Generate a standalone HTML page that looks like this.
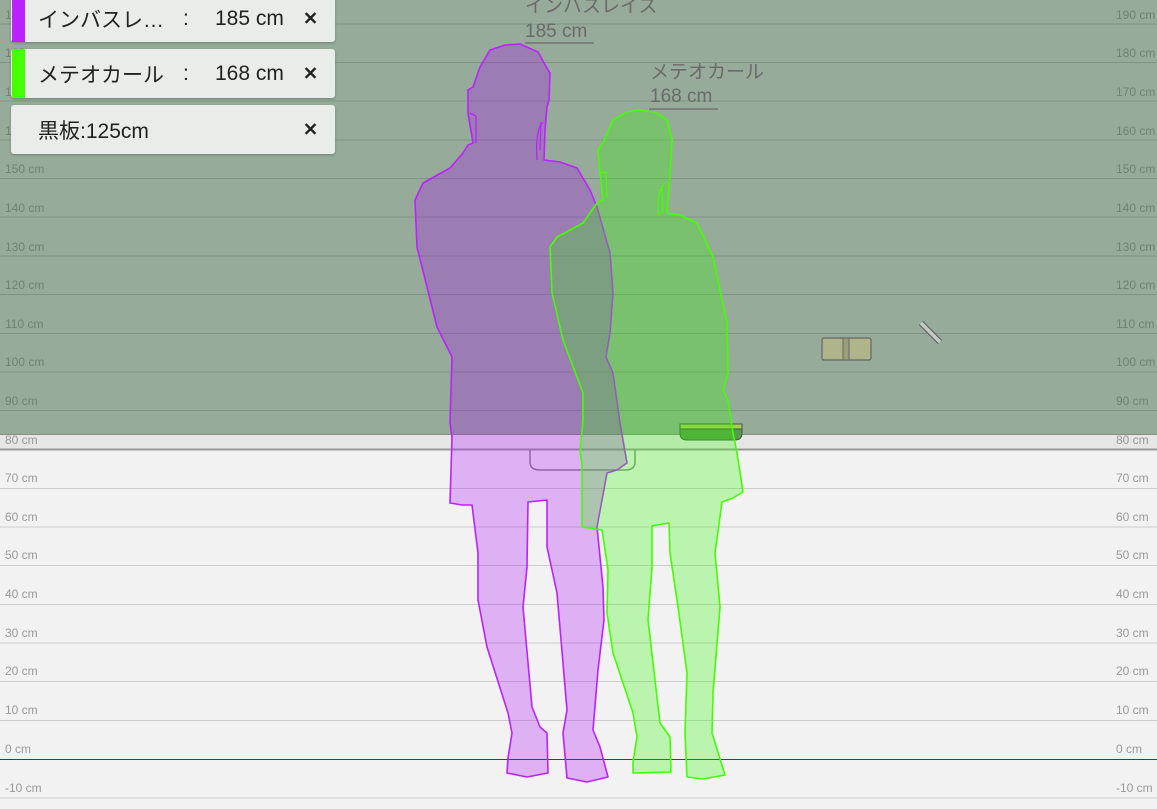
<!DOCTYPE html>
<html><head><meta charset="utf-8"><style>
html,body{margin:0;padding:0;width:1157px;height:809px;overflow:hidden;background:#f2f2f2;font-family:"Liberation Sans","Noto Sans CJK JP",sans-serif}
svg{position:absolute;left:0;top:0}
.card{position:absolute;left:11px;width:324px;background:#e9ece9;border-radius:3px;box-shadow:0 1px 2px rgba(0,0,0,.25);font-size:21px;color:#222}
.bar{position:absolute;left:1px;top:0;bottom:0;width:13px}
.t{position:absolute;left:27px;top:50%;transform:translateY(-50%);white-space:nowrap}
.c{position:absolute;left:172px;top:50%;transform:translateY(-50%)}
.v{position:absolute;left:204px;top:50%;transform:translateY(-50%)}
.x{position:absolute;left:292px;top:50%;transform:translateY(-50%);font-weight:bold;font-size:18px}
</style></head><body>
<svg width="1157" height="809" viewBox="0 0 1157 809" font-family="Liberation Sans, Noto Sans CJK JP, sans-serif">
<rect x="0" y="0" width="1157" height="435" fill="#96ab99"/>
<rect x="0" y="435" width="1157" height="14" fill="#e6e6e6"/>
<g stroke="#7f9382" stroke-width="1">
<line x1="0" x2="1157" y1="24" y2="24"/><line x1="0" x2="1157" y1="62.5" y2="62.5"/><line x1="0" x2="1157" y1="101" y2="101"/><line x1="0" x2="1157" y1="140" y2="140"/><line x1="0" x2="1157" y1="178.5" y2="178.5"/><line x1="0" x2="1157" y1="217" y2="217"/><line x1="0" x2="1157" y1="256" y2="256"/><line x1="0" x2="1157" y1="294.5" y2="294.5"/><line x1="0" x2="1157" y1="333.5" y2="333.5"/><line x1="0" x2="1157" y1="372" y2="372"/><line x1="0" x2="1157" y1="410.5" y2="410.5"/>
</g>
<line x1="0" x2="1157" y1="434.5" y2="434.5" stroke="#8a8a8a"/>
<line x1="0" x2="1157" y1="449.5" y2="449.5" stroke="#999" stroke-width="2"/>
<g stroke="#cccccc" stroke-width="1">
<line x1="0" x2="1157" y1="488.5" y2="488.5"/><line x1="0" x2="1157" y1="527" y2="527"/><line x1="0" x2="1157" y1="565.5" y2="565.5"/><line x1="0" x2="1157" y1="604.5" y2="604.5"/><line x1="0" x2="1157" y1="643" y2="643"/><line x1="0" x2="1157" y1="681.5" y2="681.5"/><line x1="0" x2="1157" y1="720.5" y2="720.5"/><line x1="0" x2="1157" y1="798" y2="798"/>
</g>
<line x1="0" x2="1157" y1="759.5" y2="759.5" stroke="#aa1111" stroke-width="1"/>
<g font-size="12" fill="#6f8273">
<text x="5" y="19">190 cm</text><text x="1116" y="19">190 cm</text>
<text x="5" y="57">180 cm</text><text x="1116" y="57">180 cm</text>
<text x="5" y="96">170 cm</text><text x="1116" y="96">170 cm</text>
<text x="5" y="135">160 cm</text><text x="1116" y="135">160 cm</text>
<text x="5" y="173">150 cm</text><text x="1116" y="173">150 cm</text>
<text x="5" y="212">140 cm</text><text x="1116" y="212">140 cm</text>
<text x="5" y="251">130 cm</text><text x="1116" y="251">130 cm</text>
<text x="5" y="289">120 cm</text><text x="1116" y="289">120 cm</text>
<text x="5" y="328">110 cm</text><text x="1116" y="328">110 cm</text>
<text x="5" y="366">100 cm</text><text x="1116" y="366">100 cm</text>
<text x="5" y="405">90 cm</text><text x="1116" y="405">90 cm</text>
</g>
<g font-size="12" fill="#999">
<text x="5" y="444">80 cm</text><text x="1116" y="444">80 cm</text>
<text x="5" y="482">70 cm</text><text x="1116" y="482">70 cm</text>
<text x="5" y="521">60 cm</text><text x="1116" y="521">60 cm</text>
<text x="5" y="559">50 cm</text><text x="1116" y="559">50 cm</text>
<text x="5" y="598">40 cm</text><text x="1116" y="598">40 cm</text>
<text x="5" y="637">30 cm</text><text x="1116" y="637">30 cm</text>
<text x="5" y="675">20 cm</text><text x="1116" y="675">20 cm</text>
<text x="5" y="714">10 cm</text><text x="1116" y="714">10 cm</text>
<text x="5" y="753">0 cm</text><text x="1116" y="753">0 cm</text>
<text x="5" y="792">-10 cm</text><text x="1116" y="792">-10 cm</text>
</g>
<path d="M530,450 V462 Q530,470 540,470 H625 Q635,470 635,462 V450" fill="none" stroke="#8a8a8a" stroke-width="1.5"/>
<rect x="822" y="338" width="49" height="22" rx="2" fill="#b0b48a" stroke="#666" stroke-width="1.2"/>
<rect x="843" y="338" width="6" height="22" fill="#9aa07c" stroke="#666" stroke-width="1"/>
<line x1="921" y1="323" x2="940" y2="342" stroke="#666" stroke-width="6"/>
<line x1="921" y1="323" x2="940" y2="342" stroke="#c2ccc4" stroke-width="3.5"/>
<path d="M680,429 H742 V433 Q742,440 735,440 H687 Q680,440 680,433 Z" fill="#5a9a4c" stroke="#3d5a3a" stroke-width="1"/>
<rect x="680" y="424" width="62" height="5" fill="#a8cc55" stroke="#3d5a3a" stroke-width="1"/>
<path fill="rgba(171,0,253,0.27)" stroke="#bb22ff" stroke-width="1.6" stroke-linejoin="round" d="M505,45 L520,44 L538,52 L548,70 L550,73 L549,100 L547,107 L545,130 L544,160 L560,162 L577,168 L590,190 L597,207 L610,253 L613,293 L610,333 L606,357 L613,373 L620,423 L627,463 L617,470 L607,473 L597,527 L603,587 L604,620 L598,670 L593,730 L600,747 L608,777 L587,782 L567,778 L563,733 L567,710 L557,593 L547,547 L547,500 L528,502 L527,567 L523,607 L532,707 L540,727 L547,733 L548,773 L527,777 L507,773 L508,758 L512,733 L508,713 L487,647 L478,600 L478,553 L472,505 L462,505 L450,503 L452,437 L450,423 L452,357 L437,327 L417,247 L415,200 L423,183 L450,168 L463,153 L468,145 L473,143 L468,113 L468,90 L473,87 L480,67 L490,50 Z"/>
<path d="M470,113 L476,116 L476,143 M543,122 Q535,130 537,160 M540,150 L541,122" fill="none" stroke="#bb22ff" stroke-width="1.3"/>
<path fill="rgba(48,253,0,0.28)" stroke="#44ff00" stroke-width="1.6" stroke-linejoin="round" d="M637,110 L655,112 L667,120 L672,140 L670,173 L667,213 L680,215 L697,223 L713,257 L727,323 L728,373 L723,390 L728,400 L733,433 L737,453 L743,492 L733,498 L722,502 L715,553 L720,607 L713,693 L712,733 L725,775 L703,779 L687,777 L685,733 L687,673 L678,607 L670,553 L669,523 L652,526 L652,567 L648,620 L660,723 L670,737 L671,772 L633,773 L633,762 L637,737 L633,713 L613,653 L607,613 L608,570 L602,530 L582,527 L582,463 L580,453 L583,420 L583,393 L563,340 L552,293 L550,247 L557,237 L583,223 L597,203 L603,200 L600,173 L598,150 L603,143 L613,120 L627,112 Z"/>
<path d="M600,173 L606,172 L607,198 M664,185 Q656,192 659,215 M662,185 L663,213" fill="none" stroke="#44ff00" stroke-width="1.3"/>
<g fill="#6a6a6a" font-size="19">
<text x="525" y="12">インバスレイス</text>
<text x="525" y="37">185 cm</text>
<text x="650" y="78">メテオカール</text>
<text x="650" y="102">168 cm</text>
</g>
<line x1="525" x2="594" y1="43" y2="43" stroke="#6a6a6a" stroke-width="1.3"/>
<line x1="649" x2="718" y1="109" y2="109" stroke="#6a6a6a" stroke-width="1.3"/>
</svg>
<div class="card" style="top:-8px;height:50px"><div class="bar" style="background:#bb22ff"></div><span class="t" style="top:27px">インバスレ…</span><span class="c" style="top:27px">:</span><span class="v" style="top:27px">185 cm</span><span class="x" style="top:27px">✕</span></div>
<div class="card" style="top:49px;height:49px"><div class="bar" style="background:#44ff00"></div><span class="t">メテオカール</span><span class="c">:</span><span class="v">168 cm</span><span class="x">✕</span></div>
<div class="card" style="top:105px;height:49px"><span class="t">黒板:125cm</span><span class="x">✕</span></div>
</body></html>
